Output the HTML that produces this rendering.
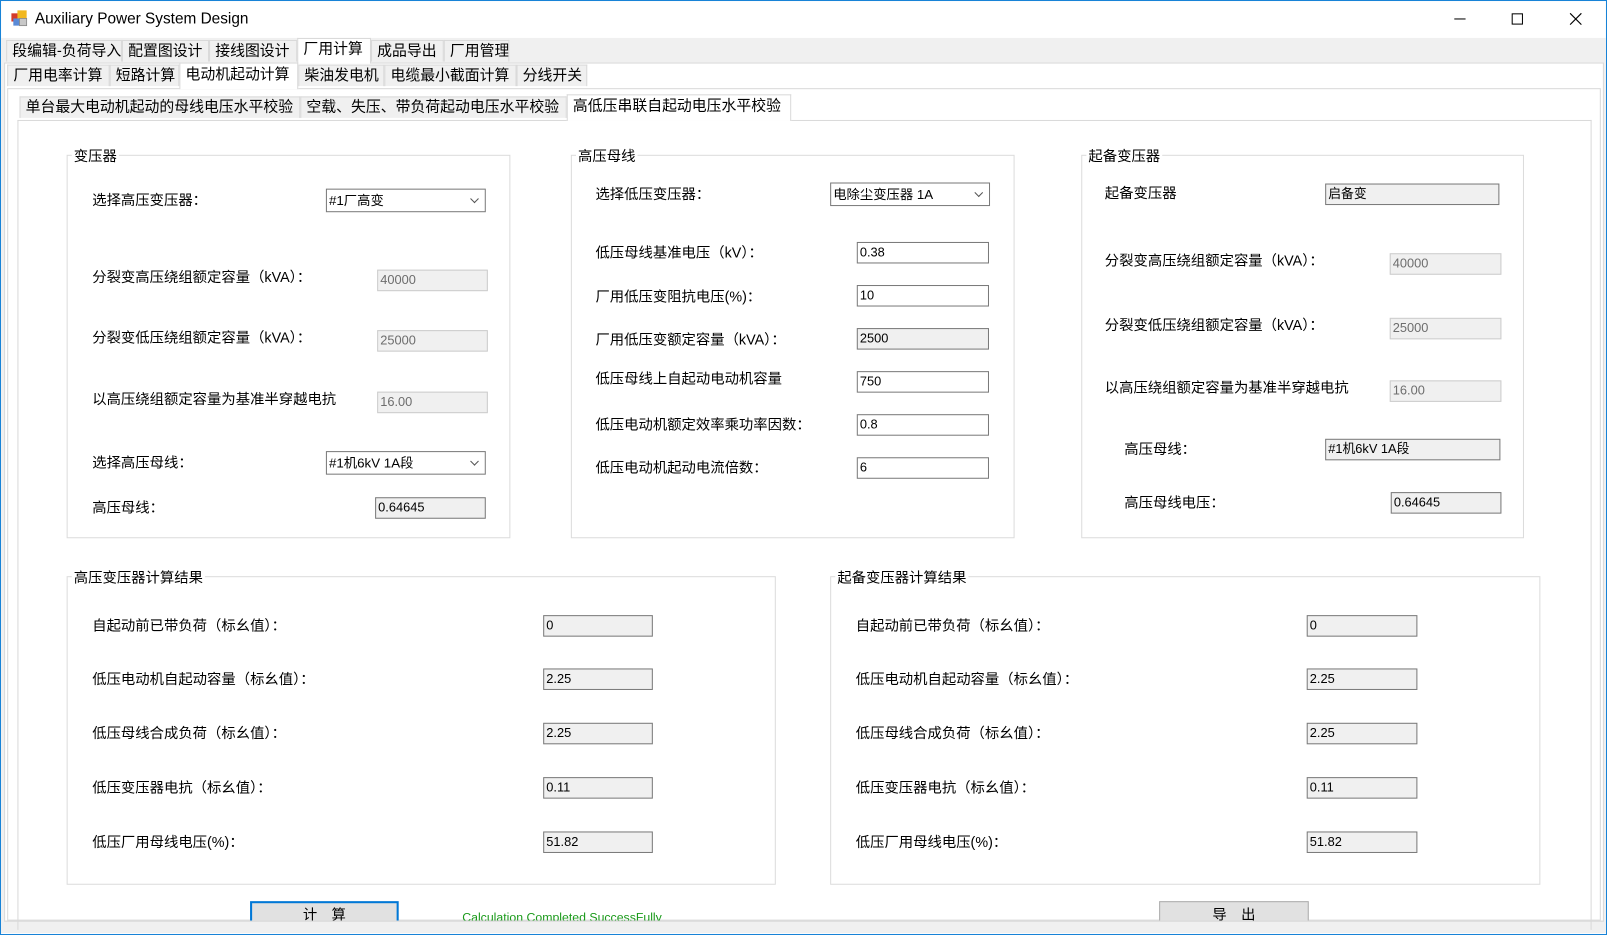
<!DOCTYPE html>
<html><head><meta charset="utf-8">
<style>
*{margin:0;padding:0;box-sizing:border-box}
html,body{width:1607px;height:935px;overflow:hidden;background:#fff}
#w{position:absolute;left:0;top:0;width:1568px;height:912px;transform:scale(1.02487,1.02522);transform-origin:0 0;font-family:"Liberation Sans","Noto Sans CJK SC",sans-serif;font-size:13px;color:#000;background:#fff}
.a{position:absolute}
.l{position:absolute;white-space:nowrap;font-size:14px;line-height:16px}
.tab{position:absolute;background:#f0f0f0;border:1px solid #d9d9d9;border-bottom:none;font-size:14.5px;line-height:20px;padding-left:5px;white-space:nowrap;overflow:hidden}
.tab.s{background:#fff;z-index:2}
.box{position:absolute;border:1px solid #dcdcdc}
.gt{position:absolute;background:#fff;padding:0 2px;font-size:14px;line-height:16px;white-space:nowrap}
.i{position:absolute;border:1px solid #7a7a7a;background:#fff;font-size:12.5px;line-height:19px;padding-left:2px;height:21px;white-space:nowrap}
.g{background:#f0f0f0}
.d{background:#f0f0f0;border-color:#cccccc;color:#6d6d6d}
.cb{position:absolute;border:1px solid #7a7a7a;background:#fff;height:23px;font-size:13px;line-height:21px;padding-left:2px;white-space:nowrap}
.cb:after{content:"";position:absolute;right:7px;top:6px;width:5px;height:5px;border-right:1px solid #555;border-bottom:1px solid #555;transform:rotate(45deg)}
.clip{overflow:hidden;height:14px}
</style></head><body><div id="w">
<div class="a" style="left:0;top:0;width:1568px;height:912px;border:1px solid #1883d7"></div>
<svg class="a" style="left:11px;top:10px" width="17" height="17" viewBox="0 0 17 17"><rect x="0" y="3" width="8" height="8" fill="#d43b2a"/><rect x="6" y="0" width="9" height="9" fill="#f2b81f"/><rect x="2" y="8" width="7" height="7" fill="#5a8ad6"/><rect x="8" y="8" width="7" height="7" fill="#c8c8c8" stroke="#888" stroke-width=".8"/></svg>
<div class="l" style="left:34px;top:10px;font-size:15px;line-height:18px">Auxiliary Power System Design</div>
<div class="a" style="left:1419px;top:18px;width:11px;height:1px;background:#000"></div>
<div class="a" style="left:1475px;top:13px;width:11px;height:11px;border:1px solid #000"></div>
<svg class="a" style="left:1531px;top:12px" width="13" height="13"><path d="M1 1L12 12M12 1L1 12" stroke="#000" stroke-width="1.1"/></svg>
<div class="a" style="left:1px;top:37px;width:1566px;height:873px;background:#f0f0f0"></div>
<div class="tab" style="left:6px;top:39px;width:113px">段编辑-负荷导入</div>
<div class="tab" style="left:119px;top:39px;width:85px">配置图设计</div>
<div class="tab" style="left:204px;top:39px;width:86px">接线图设计</div>
<div class="tab s" style="left:290px;top:37px;width:72px;height:25px;line-height:21px">厂用计算</div>
<div class="tab" style="left:362px;top:39px;width:71px">成品导出</div>
<div class="tab" style="left:433px;top:39px;width:64px">厂用管理</div>
<div class="a" style="left:4px;top:61px;width:1561px;height:838px;background:#fff;border:1px solid #d9d9d9"></div>
<div class="tab" style="left:7px;top:63px;width:100px">厂用电率计算</div>
<div class="tab" style="left:107px;top:63px;width:68px">短路计算</div>
<div class="tab s" style="left:175px;top:61px;width:116px;height:26px;line-height:22px">电动机起动计算</div>
<div class="tab" style="left:291px;top:63px;width:84px">柴油发电机</div>
<div class="tab" style="left:375px;top:63px;width:129px">电缆最小截面计算</div>
<div class="tab" style="left:504px;top:63px;width:69px">分线开关</div>
<div class="a" style="left:7px;top:86px;width:1555px;height:812px;background:#fff;border:1px solid #d9d9d9"></div>
<div class="tab" style="left:19px;top:94px;width:274px">单台最大电动机起动的母线电压水平校验</div>
<div class="tab" style="left:293px;top:94px;width:260px">空载、失压、带负荷起动电压水平校验</div>
<div class="tab s" style="left:553px;top:92px;width:219px;height:26px;line-height:23px">高低压串联自起动电压水平校验</div>
<div class="a" style="left:17px;top:117px;width:1536px;height:790px;border:1px solid #d9d9d9;border-bottom:none"></div>

<div class="box" style="left:65px;top:151px;width:433px;height:374px"></div>
<div class="gt" style="left:70px;top:144px">变压器</div>
<div class="l" style="left:90px;top:187px">选择高压变压器：</div>
<div class="cb" style="left:318px;top:184px;width:156px">#1厂高变</div>
<div class="l" style="left:90px;top:262px">分裂变高压绕组额定容量（kVA）：</div>
<div class="i d" style="left:368px;top:263px;width:108px">40000</div>
<div class="l" style="left:90px;top:321px">分裂变低压绕组额定容量（kVA）：</div>
<div class="i d" style="left:368px;top:322px;width:108px">25000</div>
<div class="l clip" style="left:90px;top:381px;height:17px">以高压绕组额定容量为基准半穿越电抗<br>(%)：</div>
<div class="i d" style="left:368px;top:382px;width:108px">16.00</div>
<div class="l" style="left:90px;top:443px">选择高压母线：</div>
<div class="cb" style="left:318px;top:440px;width:156px">#1机6kV 1A段</div>
<div class="l" style="left:90px;top:487px">高压母线：</div>
<div class="i g" style="left:366px;top:485px;width:108px">0.64645</div>

<div class="box" style="left:557px;top:151px;width:433px;height:374px"></div>
<div class="gt" style="left:562px;top:144px">高压母线</div>
<div class="l" style="left:581px;top:181px">选择低压变压器：</div>
<div class="cb" style="left:810px;top:178px;width:156px">电除尘变压器 1A</div>
<div class="l" style="left:581px;top:238px">低压母线基准电压（kV）：</div>
<div class="i" style="left:836px;top:236px;width:129px">0.38</div>
<div class="l" style="left:581px;top:281px">厂用低压变阻抗电压(%)：</div>
<div class="i" style="left:836px;top:278px;width:129px">10</div>
<div class="l" style="left:581px;top:323px">厂用低压变额定容量（kVA）：</div>
<div class="i g" style="left:836px;top:320px;width:129px">2500</div>
<div class="l clip" style="left:581px;top:361px;height:17px">低压母线上自起动电动机容量<br>（kW）：</div>
<div class="i" style="left:836px;top:362px;width:129px">750</div>
<div class="l" style="left:581px;top:406px">低压电动机额定效率乘功率因数：</div>
<div class="i" style="left:836px;top:404px;width:129px">0.8</div>
<div class="l" style="left:581px;top:448px">低压电动机起动电流倍数：</div>
<div class="i" style="left:836px;top:446px;width:129px">6</div>

<div class="box" style="left:1055px;top:151px;width:432px;height:374px"></div>
<div class="gt" style="left:1060px;top:144px">起备变压器</div>
<div class="l" style="left:1078px;top:180px">起备变压器</div>
<div class="i g" style="left:1293px;top:179px;width:170px">启备变</div>
<div class="l" style="left:1078px;top:246px">分裂变高压绕组额定容量（kVA）：</div>
<div class="i d" style="left:1356px;top:247px;width:109px">40000</div>
<div class="l" style="left:1078px;top:309px">分裂变低压绕组额定容量（kVA）：</div>
<div class="i d" style="left:1356px;top:310px;width:109px">25000</div>
<div class="l clip" style="left:1078px;top:370px;height:17px">以高压绕组额定容量为基准半穿越电抗<br>(%)：</div>
<div class="i d" style="left:1356px;top:371px;width:109px">16.00</div>
<div class="l" style="left:1097px;top:430px">高压母线：</div>
<div class="i g" style="left:1293px;top:428px;width:171px">#1机6kV 1A段</div>
<div class="l" style="left:1097px;top:482px">高压母线电压：</div>
<div class="i g" style="left:1357px;top:480px;width:108px">0.64645</div>

<div class="box" style="left:65px;top:562px;width:692px;height:301px"></div>
<div class="gt" style="left:70px;top:555px">高压变压器计算结果</div>
<div class="l" style="left:90px;top:602px">自起动前已带负荷（标幺值）：</div>
<div class="i g" style="left:530px;top:600px;width:107px">0</div>
<div class="l" style="left:90px;top:654px">低压电动机自起动容量（标幺值）：</div>
<div class="i g" style="left:530px;top:652px;width:107px">2.25</div>
<div class="l" style="left:90px;top:707px">低压母线合成负荷（标幺值）：</div>
<div class="i g" style="left:530px;top:705px;width:107px">2.25</div>
<div class="l" style="left:90px;top:760px">低压变压器电抗（标幺值）：</div>
<div class="i g" style="left:530px;top:758px;width:107px">0.11</div>
<div class="l" style="left:90px;top:813px">低压厂用母线电压(%)：</div>
<div class="i g" style="left:530px;top:811px;width:107px">51.82</div>

<div class="box" style="left:810px;top:562px;width:693px;height:301px"></div>
<div class="gt" style="left:815px;top:555px">起备变压器计算结果</div>
<div class="l" style="left:835px;top:602px">自起动前已带负荷（标幺值）：</div>
<div class="i g" style="left:1275px;top:600px;width:108px">0</div>
<div class="l" style="left:835px;top:654px">低压电动机自起动容量（标幺值）：</div>
<div class="i g" style="left:1275px;top:652px;width:108px">2.25</div>
<div class="l" style="left:835px;top:707px">低压母线合成负荷（标幺值）：</div>
<div class="i g" style="left:1275px;top:705px;width:108px">2.25</div>
<div class="l" style="left:835px;top:760px">低压变压器电抗（标幺值）：</div>
<div class="i g" style="left:1275px;top:758px;width:108px">0.11</div>
<div class="l" style="left:835px;top:813px">低压厂用母线电压(%)：</div>
<div class="i g" style="left:1275px;top:811px;width:108px">51.82</div>

<div class="a" style="left:17px;top:870px;width:1536px;height:28px;overflow:hidden">
  <div class="a" style="left:227px;top:9px;width:145px;height:30px;background:#e1e1e1;border:2px solid #0078d7;text-align:center;font-size:14px;line-height:22px">计　算</div>
  <div class="a" style="left:434px;top:18px;color:#1a9a1a;font-size:12px;white-space:nowrap">Calculation Completed SuccessFully</div>
  <div class="a" style="left:1114px;top:9px;width:146px;height:30px;background:#e1e1e1;border:1px solid #adadad;text-align:center;font-size:14px;line-height:24px">导　出</div>
</div>
<div class="a" style="left:4px;top:898px;width:1561px;height:1px;background:#d9d9d9"></div>
</div></body></html>
